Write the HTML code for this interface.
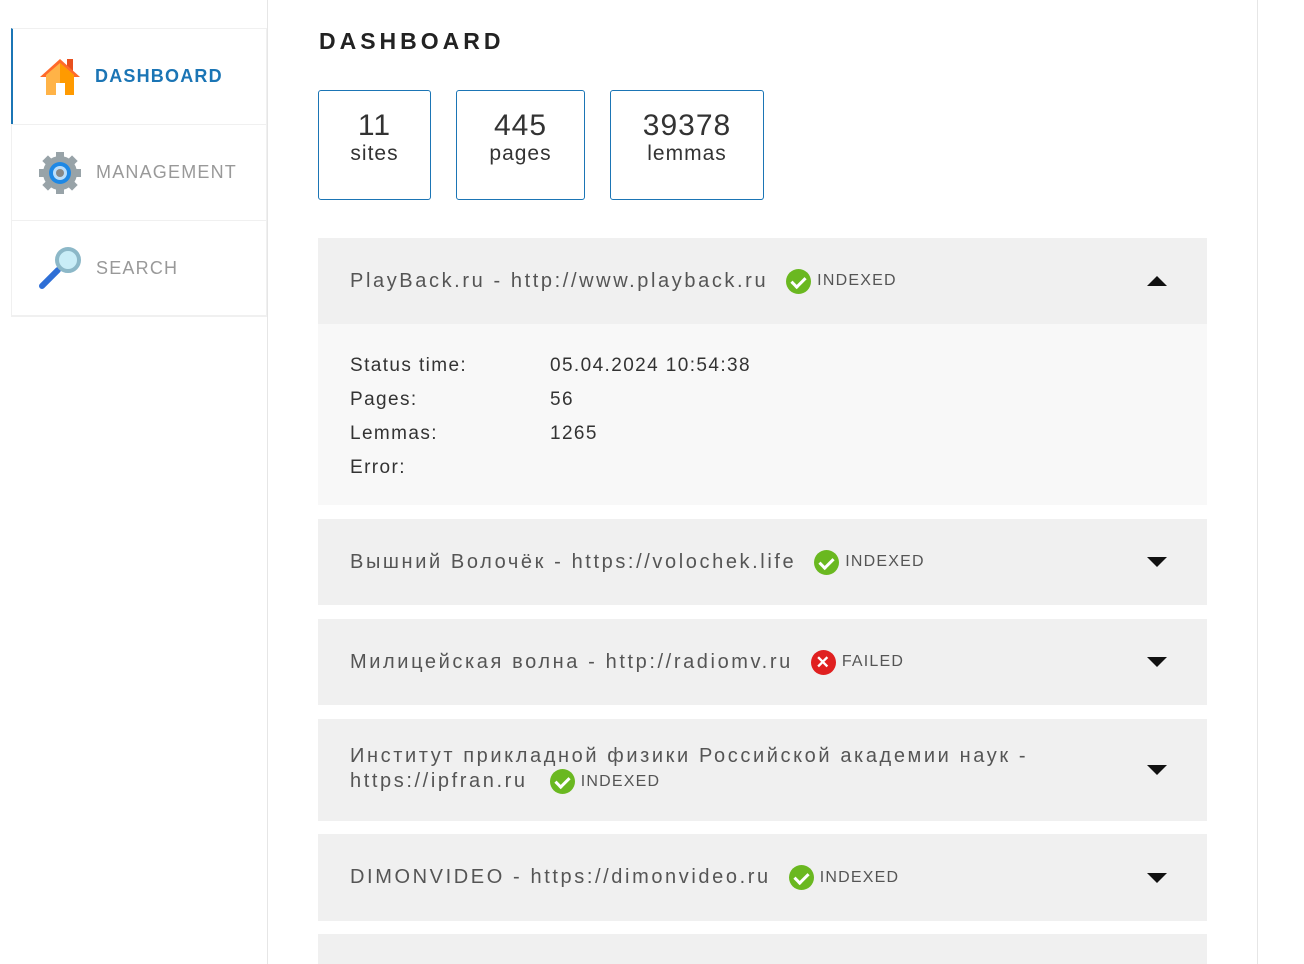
<!DOCTYPE html>
<html><head><meta charset="utf-8"><style>
*{box-sizing:border-box;margin:0;padding:0}
body{width:1304px;height:964px;overflow:hidden;background:#fff;font-family:"Liberation Sans","Noto Sans CJK SC",sans-serif;color:#444;position:relative}
.vl{position:absolute;top:0;height:964px;width:1px;background:#e6e6e6}
.side{position:absolute;left:11px;top:28px;width:256px}
.item{height:96px;border:1px solid #f0f0f0;border-bottom:none;display:flex;align-items:center;padding-left:26px;font-size:18px;letter-spacing:1.2px;color:#999}
.item:last-child{border-bottom:2px solid #f0f0f0;height:97px}
.item.act{border-left:2px solid #1b75b5;color:#1b75b5;font-weight:bold;padding-left:24px}
.item svg{margin-right:12px}
h1{position:absolute;left:319px;top:28px;font-size:23px;letter-spacing:4px;font-weight:bold;color:#222}
.card{position:absolute;top:90px;height:110px;border:1px solid #1b75b5;border-radius:3px;text-align:center;font-size:21px;color:#333;padding-top:20px;line-height:25px;letter-spacing:1px}
.card b{display:block;font-weight:normal;font-size:30px;line-height:30px}
.acc{position:absolute;left:318px;width:889px;background:#f0f0f0;font-size:20px;letter-spacing:2.6px;color:#555;padding-left:32px;display:flex;align-items:center}
.st{font-size:16px;letter-spacing:1.2px;margin-left:8px;display:inline-flex;align-items:center;vertical-align:middle}
.st i{display:inline-block;width:25px;height:25px;border-radius:50%;margin-right:6px;position:relative}
.ok{background:#6ab820}
.ok:after{content:"";position:absolute;left:8px;top:5px;width:6px;height:11px;border:solid #fff;border-width:0 3px 3px 0;transform:rotate(45deg)}
.bad{background:#e02020;color:#fff;font-style:normal;text-align:center;line-height:25px;font-size:17px;font-weight:bold}
.arr{position:absolute;right:40px;top:50%;margin-top:-5px;border-left:10px solid transparent;border-right:10px solid transparent;border-top:10px solid #111}
.up{border-top:none;border-bottom:10px solid #111}
.body{position:absolute;left:318px;top:324px;width:889px;height:181px;background:#f8f8f8;font-size:19px;letter-spacing:1.4px;color:#333;padding:25px 0 0 32px;line-height:34px}
.body span{display:inline-block;width:200px}
</style></head><body>
<div class="vl" style="left:267px"></div><div class="vl" style="left:1257px"></div>
<div class="side">
<div class="item act"><svg width="46" height="40" viewBox="0 0 46 40"><rect x="30" y="2" width="6" height="12" fill="#e8501e"/><polygon points="23,2 3,20 43,20" fill="#ff6a2a"/><polygon points="9,18 23,6 37,18 37,38 9,38" fill="#ffb347"/><polygon points="23,6 37,18 37,38 23,38" fill="#ff9a00"/><rect x="19" y="26" width="9" height="12" fill="#fff"/></svg>DASHBOARD</div>
<div class="item"><svg width="46" height="44" viewBox="0 0 46 44"><g fill="#98a3a8"><circle cx="22" cy="22" r="17"/><rect x="18" y="1" width="8" height="42"/><rect x="1" y="18" width="42" height="8"/><rect x="18" y="1" width="8" height="42" transform="rotate(45 22 22)"/><rect x="18" y="1" width="8" height="42" transform="rotate(-45 22 22)"/></g><circle cx="22" cy="22" r="11" fill="#1e88e5"/><circle cx="22" cy="22" r="7" fill="#bbdefb"/><circle cx="22" cy="22" r="4" fill="#888"/></svg>MANAGEMENT</div>
<div class="item"><svg width="46" height="44" viewBox="0 0 46 44"><line x1="4" y1="40" x2="20" y2="24" stroke="#2f6fd6" stroke-width="6" stroke-linecap="round"/><circle cx="30" cy="14" r="11" fill="#c9edf7" stroke="#8cb8c8" stroke-width="4"/></svg>SEARCH</div>
</div>
<h1>DASHBOARD</h1>
<div class="card" style="left:318px;width:113px"><b>11</b>sites</div>
<div class="card" style="left:456px;width:129px"><b>445</b>pages</div>
<div class="card" style="left:610px;width:154px"><b>39378</b>lemmas</div>

<div class="acc" style="top:238px;height:86px">PlayBack.ru - http://www.playback.ru <span class="st" style="margin-left:18px"><i class="ok"></i>INDEXED</span><div class="arr up"></div></div>
<div class="body"><span>Status time:</span>05.04.2024 10:54:38<br><span>Pages:</span>56<br><span>Lemmas:</span>1265<br><span>Error:</span></div>
<div class="acc" style="top:519px;height:86px">Вышний Волочёк - https://volochek.life <span class="st" style="margin-left:18px"><i class="ok"></i>INDEXED</span><div class="arr"></div></div>
<div class="acc" style="top:619px;height:86px">Милицейская волна - http://radiomv.ru <span class="st" style="margin-left:18px"><i class="bad">✕</i>FAILED</span><div class="arr"></div></div>
<div class="acc" style="top:719px;height:102px;display:block;padding-top:25px;line-height:25px">Институт прикладной физики Российской академии наук -<br>https://ipfran.ru <span class="st" style="margin-left:14px"><i class="ok"></i>INDEXED</span><div class="arr"></div></div>
<div class="acc" style="top:834px;height:87px">DIMONVIDEO - https://dimonvideo.ru <span class="st" style="margin-left:18px"><i class="ok"></i>INDEXED</span><div class="arr"></div></div>
<div class="acc" style="top:934px;height:30px"></div>
</body></html>
